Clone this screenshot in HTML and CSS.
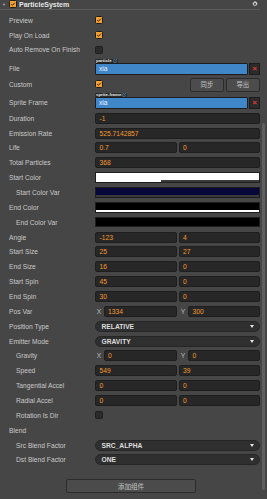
FILE: index.html
```html
<!DOCTYPE html>
<html>
<head>
<meta charset="utf-8">
<link rel="stylesheet" href="styles.css">
</head>
<body>
<div class="panel">
  <div class="header">
    <span class="fold">▼</span>
    <span class="cb on small"><svg viewBox="0 0 8 8"><path d="M1.6 4.2 L3.3 5.8 L6.5 2.2" /></svg></span>
    <span class="title">ParticleSystem</span>
    <svg class="gear" viewBox="0 0 10 10"><path d="M4.2 0.5h1.6l0.3 1.3 1-0.5 1.1 1.1-0.5 1 1.3 0.3v1.6l-1.3 0.3 0.5 1-1.1 1.1-1-0.5-0.3 1.3H4.2l-0.3-1.3-1 0.5-1.1-1.1 0.5-1-1.3-0.3V4.2l1.3-0.3-0.5-1 1.1-1.1 1 0.5z M5 3.4a1.6 1.6 0 1 0 0.01 0z" fill-rule="evenodd"/></svg>
  </div>

  <div class="rows">
    <div class="row"><span class="label">Preview</span><span class="cb on"><svg viewBox="0 0 8 8"><path d="M1.6 4.2 L3.3 5.8 L6.5 2.2" /></svg></span></div>
    <div class="row"><span class="label">Play On Load</span><span class="cb on"><svg viewBox="0 0 8 8"><path d="M1.6 4.2 L3.3 5.8 L6.5 2.2" /></svg></span></div>
    <div class="row"><span class="label">Auto Remove On Finish</span><span class="cb"></span></div>
    <div class="row tall file">
      <span class="label">File</span>
      <div class="asset">
        <span class="badge">particle<svg viewBox="0 0 6 6"><path d="M1 1h2M1 1v4h4v-2M3 3l2.5-2.5M4 0.5h1.5v1.5"/></svg></span>
        <div class="asset-line"><span class="asset-field">xia</span><span class="remove">×</span></div>
      </div>
    </div>
    <div class="row custom"><span class="label">Custom</span><span class="cb on"><svg viewBox="0 0 8 8"><path d="M1.6 4.2 L3.3 5.8 L6.5 2.2" /></svg></span>
      <span class="btns"><span class="btn">同步</span><span class="btn">导出</span></span>
    </div>
    <div class="row tall sprite">
      <span class="label">Sprite Frame</span>
      <div class="asset">
        <span class="badge">sprite-frame<svg viewBox="0 0 6 6"><path d="M1 1h2M1 1v4h4v-2M3 3l2.5-2.5M4 0.5h1.5v1.5"/></svg></span>
        <div class="asset-line"><span class="asset-field">xia</span><span class="remove">×</span></div>
      </div>
    </div>
    <div class="row"><span class="label">Duration</span><span class="num">-1</span></div>
    <div class="row"><span class="label">Emission Rate</span><span class="num">525.7142857</span></div>
    <div class="row"><span class="label">Life</span><span class="pair"><span class="num">0.7</span><span class="num">0</span></span></div>
    <div class="row"><span class="label">Total Particles</span><span class="num">368</span></div>
    <div class="row"><span class="label">Start Color</span><span class="color" ><span class="swatch white"></span><span class="alpha"><span class="alpha-fill" style="width:40%"></span></span></span></div>
    <div class="row"><span class="label sub">Start Color Var</span><span class="color"><span class="swatch navy"></span><span class="alpha"></span></span></div>
    <div class="row"><span class="label">End Color</span><span class="color"><span class="swatch black"></span><span class="alpha"><span class="alpha-fill" style="width:100%"></span></span></span></div>
    <div class="row"><span class="label sub">End Color Var</span><span class="color"><span class="swatch black"></span><span class="alpha"></span></span></div>
    <div class="row"><span class="label">Angle</span><span class="pair"><span class="num">-123</span><span class="num">4</span></span></div>
    <div class="row"><span class="label">Start Size</span><span class="pair"><span class="num">25</span><span class="num">27</span></span></div>
    <div class="row"><span class="label">End Size</span><span class="pair"><span class="num">16</span><span class="num">0</span></span></div>
    <div class="row"><span class="label">Start Spin</span><span class="pair"><span class="num">45</span><span class="num">0</span></span></div>
    <div class="row"><span class="label">End Spin</span><span class="pair"><span class="num">30</span><span class="num">0</span></span></div>
    <div class="row"><span class="label">Pos Var</span><span class="pair"><span class="axis"><span class="ax">X</span><span class="num">1334</span></span><span class="axis"><span class="ax">Y</span><span class="num">300</span></span></span></div>
    <div class="row"><span class="label">Position Type</span><span class="select">RELATIVE<span class="arrow"></span></span></div>
    <div class="row"><span class="label">Emitter Mode</span><span class="select">GRAVITY<span class="arrow"></span></span></div>
    <div class="row"><span class="label sub">Gravity</span><span class="pair"><span class="axis"><span class="ax">X</span><span class="num">0</span></span><span class="axis"><span class="ax">Y</span><span class="num">0</span></span></span></div>
    <div class="row"><span class="label sub">Speed</span><span class="pair"><span class="num">549</span><span class="num">39</span></span></div>
    <div class="row"><span class="label sub">Tangential Accel</span><span class="pair"><span class="num">0</span><span class="num">0</span></span></div>
    <div class="row"><span class="label sub">Radial Accel</span><span class="pair"><span class="num">0</span><span class="num">0</span></span></div>
    <div class="row"><span class="label sub">Rotation Is Dir</span><span class="cb"></span></div>
    <div class="row"><span class="label">Blend</span></div>
    <div class="row"><span class="label sub">Src Blend Factor</span><span class="select">SRC_ALPHA<span class="arrow"></span></span></div>
    <div class="row"><span class="label sub">Dst Blend Factor</span><span class="select">ONE<span class="arrow"></span></span></div>
  </div>

  <div class="footer"><span class="add">添加组件</span></div>
  <div class="scroll"></div>
</div>
</body>
</html>
```

FILE: styles.css
```css
html, body {
  margin: 0;
  padding: 0;
  background: #464646;
}
body {
  width: 267px;
  height: 499px;
  overflow: hidden;
  font-family: "Liberation Sans", Arial, "Noto Sans CJK SC", sans-serif;
  font-size: 6.7px;
  color: #c9c9c9;
}
.panel {
  position: relative;
  width: 267px;
  height: 499px;
}
.header {
  display: flex;
  align-items: center;
  height: 9px;
  width: 260px;
  border-bottom: 1px solid #5a5a5a;
  box-sizing: content-box;
  margin-top: -0.5px;
}
.fold {
  font-size: 4px;
  color: #b0b0b0;
  width: 9px;
  padding-left: 2px;
  box-sizing: border-box;
}
.title {
  font-weight: bold;
  font-size: 7px;
  color: #e6e6e6;
  margin-left: 2px;
}
.gear {
  width: 6px;
  height: 6px;
  margin-left: auto;
  margin-right: 2px;
  fill: #d8d8d8;
}
.rows {
  padding-top: 3.3px;
  width: 260px;
}
.row {
  display: flex;
  align-items: center;
  height: 14.86px;
}
.row.file { height: 19.44px; align-items: flex-end; padding-bottom: 2px; box-sizing: border-box; }
.row.sprite { height: 19.14px; align-items: flex-end; padding-bottom: 1.8px; box-sizing: border-box; }
.row.file .label, .row.sprite .label { align-self: flex-end; line-height: 11.7px; }
.label {
  width: 95px;
  flex: none;
  padding-left: 9px;
  box-sizing: border-box;
  white-space: nowrap;
  color: #c9c9c9;
}
.label.sub { padding-left: 16px; }

.cb {
  width: 8px;
  height: 8px;
  box-sizing: border-box;
  border-radius: 1.5px;
  background: #2a2a2a;
  border: 1px solid #1f1f1f;
  display: inline-flex;
  flex: none;
}
.cb.on {
  background: #f5a02e;
  border-color: #1e1e1e;
}
.cb svg {
  width: 100%;
  height: 100%;
  fill: none;
  stroke: #262626;
  stroke-width: 1.3;
}
.cb.small { width: 8px; height: 8px; }

.asset {
  flex: 1;
  display: flex;
  flex-direction: column;
  align-items: flex-start;
}
.badge {
  display: inline-flex;
  align-items: center;
  height: 4.6px;
  padding: 0 1px;
  background: #2a2a2a;
  color: #e8e8e8;
  font-weight: bold;
  font-size: 4.4px;
  line-height: 4.6px;
  border-radius: 1px 1px 0 0;
}
.badge svg {
  width: 4px;
  height: 4px;
  margin-left: 1px;
  fill: none;
  stroke: #5aa0e0;
  stroke-width: 0.8;
}
.asset-line {
  display: flex;
  width: 100%;
  height: 11.7px;
  gap: 1px;
}
.asset-field {
  flex: 1;
  background: #3f87c9;
  border: 1px solid #1d1d1d;
  box-sizing: border-box;
  color: #eaf2ff;
  padding-left: 3px;
  line-height: 9.7px;
  border-radius: 1px;
}
.remove {
  width: 11px;
  flex: none;
  background: #2b2b2b;
  border: 1px solid #1d1d1d;
  box-sizing: border-box;
  color: #e23a3a;
  font-weight: bold;
  font-size: 8px;
  line-height: 9px;
  text-align: center;
}

.btns {
  margin-left: auto;
  display: flex;
  gap: 1.6px;
  align-self: flex-start;
  margin-top: 1.1px;
}
.btn {
  width: 34.3px;
  height: 13.6px;
  box-sizing: border-box;
  background: #4c4c4c;
  border: 1px solid #2c2c2c;
  border-radius: 2px;
  color: #c4c4c4;
  font-family: "Noto Sans CJK SC", sans-serif;
  font-size: 6.4px;
  display: flex;
  align-items: center;
  justify-content: center;
}

.num {
  flex: 1;
  height: 11px;
  box-sizing: border-box;
  background: #272727;
  border: 1px solid #1e1e1e;
  border-radius: 2px;
  color: #f59b2e;
  padding-left: 3.5px;
  line-height: 9px;
  min-width: 0;
}
.pair {
  flex: 1;
  display: flex;
  gap: 2px;
}
.axis {
  flex: 1;
  display: flex;
  align-items: center;
}
.ax {
  width: 8.6px;
  flex: none;
  color: #bdbdbd;
  text-align: center;
  padding-right: 0.6px;
  box-sizing: border-box;
}
.axis + .axis .ax { width: 9.5px; }

.color {
  flex: 1;
  height: 10.5px;
  box-sizing: border-box;
  border: 1px solid #1e1e1e;
  display: flex;
  flex-direction: column;
  background: #1e1e1e;
}
.swatch { flex: 1; }
.swatch.white { background: #ffffff; }
.swatch.navy { background: #07073a; }
.swatch.black { background: #000000; }
.alpha {
  height: 2px;
  background: #3a3a3a;
  display: flex;
}
.swatch.black + .alpha { background: #000; }
.alpha-fill { background: #ffffff; height: 100%; }

.select {
  flex: 1;
  height: 11px;
  box-sizing: border-box;
  background: #2f2f2f;
  border: 1px solid #262626;
  border-radius: 6px;
  color: #dedede;
  font-weight: bold;
  padding-left: 5.5px;
  padding-right: 5px;
  line-height: 9px;
  display: flex;
  align-items: center;
}
.arrow {
  margin-left: auto;
  width: 0;
  height: 0;
  border-left: 2.5px solid transparent;
  border-right: 2.5px solid transparent;
  border-top: 3.5px solid #e6e6e6;
}

.footer {
  padding-top: 11.5px;
  padding-left: 65.7px;
}
.add {
  display: flex;
  align-items: center;
  justify-content: center;
  width: 130.6px;
  height: 14px;
  box-sizing: border-box;
  background: #4b4b4b;
  border: 1px solid #2c2c2c;
  border-radius: 2px;
  color: #c2c2c2;
  font-family: "Noto Sans CJK SC", sans-serif;
  font-size: 6.6px;
}
.scroll {
  position: absolute;
  left: 262px;
  top: 123px;
  width: 2.6px;
  height: 367px;
  background: #5f5f5f;
  border-radius: 1.5px;
}
```
